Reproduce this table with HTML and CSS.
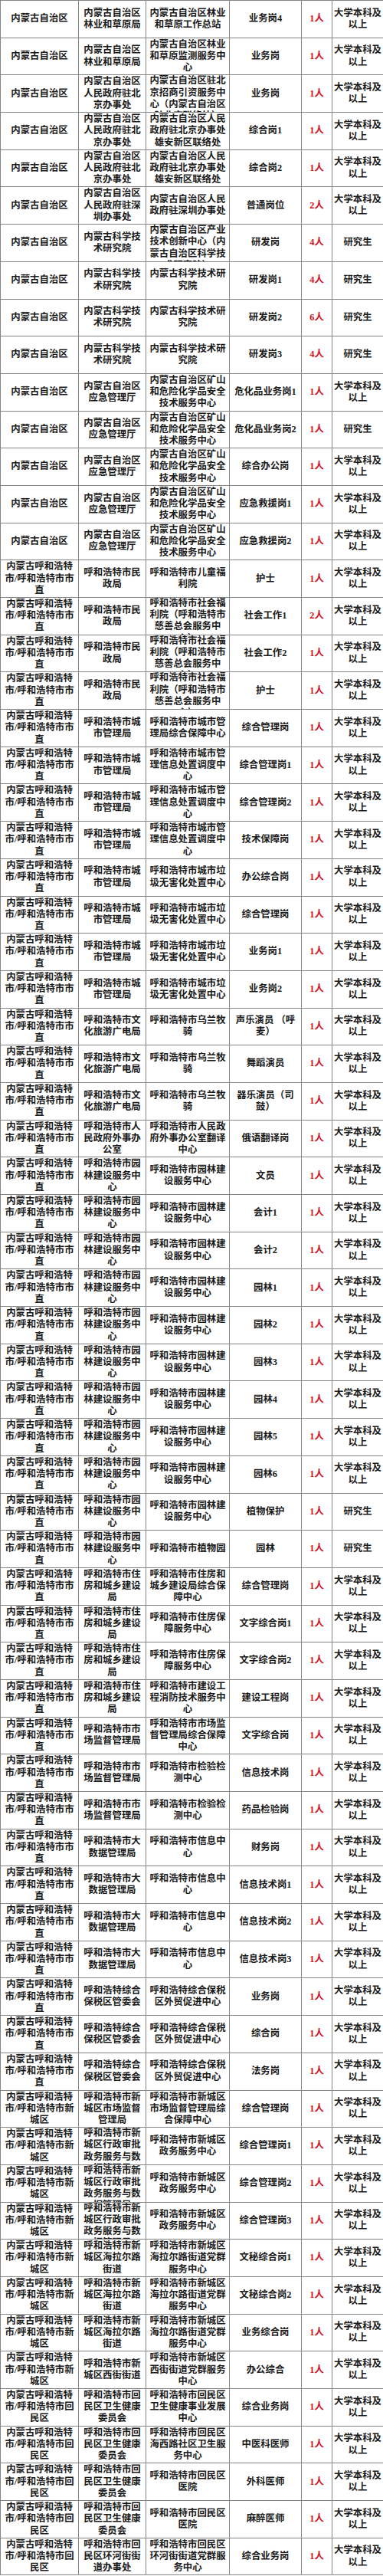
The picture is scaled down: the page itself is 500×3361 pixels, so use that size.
FILE: index.html
```html
<!DOCTYPE html>
<html lang="zh-CN">
<head>
<meta charset="utf-8">
<title>岗位表</title>
<link rel="stylesheet" href="styles.css">
</head>
<body>
<table class="jobs">
<colgroup><col class="w1"><col class="w2"><col class="w3"><col class="w4"><col class="w5"><col class="w6"></colgroup>
<tbody>
<tr><td><div class="cell">内蒙古自治区</div></td><td><div class="cell">内蒙古自治区林业和草原局</div></td><td><div class="cell">内蒙古自治区林业和草原工作总站</div></td><td><div class="cell">业务岗4</div></td><td><div class="cell">1人</div></td><td><div class="cell">大学本科及以上</div></td></tr>
<tr><td><div class="cell">内蒙古自治区</div></td><td><div class="cell">内蒙古自治区林业和草原局</div></td><td><div class="cell">内蒙古自治区林业和草原监测服务中心</div></td><td><div class="cell">业务岗</div></td><td><div class="cell">1人</div></td><td><div class="cell">大学本科及以上</div></td></tr>
<tr><td><div class="cell">内蒙古自治区</div></td><td><div class="cell">内蒙古自治区人民政府驻北京办事处</div></td><td><div class="cell">内蒙古自治区驻北京招商引资服务中心（内蒙古自治区驻北京联络处）</div></td><td><div class="cell">业务岗</div></td><td><div class="cell">1人</div></td><td><div class="cell">大学本科及以上</div></td></tr>
<tr><td><div class="cell">内蒙古自治区</div></td><td><div class="cell">内蒙古自治区人民政府驻北京办事处</div></td><td><div class="cell">内蒙古自治区人民政府驻北京办事处雄安新区联络处</div></td><td><div class="cell">综合岗1</div></td><td><div class="cell">1人</div></td><td><div class="cell">大学本科及以上</div></td></tr>
<tr><td><div class="cell">内蒙古自治区</div></td><td><div class="cell">内蒙古自治区人民政府驻北京办事处</div></td><td><div class="cell">内蒙古自治区人民政府驻北京办事处雄安新区联络处</div></td><td><div class="cell">综合岗2</div></td><td><div class="cell">1人</div></td><td><div class="cell">大学本科及以上</div></td></tr>
<tr><td><div class="cell">内蒙古自治区</div></td><td><div class="cell">内蒙古自治区人民政府驻深圳办事处</div></td><td><div class="cell">内蒙古自治区人民政府驻深圳办事处</div></td><td><div class="cell">普通岗位</div></td><td><div class="cell">2人</div></td><td><div class="cell">大学本科及以上</div></td></tr>
<tr><td><div class="cell">内蒙古自治区</div></td><td><div class="cell">内蒙古科学技术研究院</div></td><td><div class="cell">内蒙古自治区产业技术创新中心（内蒙古自治区科学技术研究院）</div></td><td><div class="cell">研发岗</div></td><td><div class="cell">4人</div></td><td><div class="cell">研究生</div></td></tr>
<tr><td><div class="cell">内蒙古自治区</div></td><td><div class="cell">内蒙古科学技术研究院</div></td><td><div class="cell">内蒙古科学技术研究院</div></td><td><div class="cell">研发岗1</div></td><td><div class="cell">4人</div></td><td><div class="cell">研究生</div></td></tr>
<tr><td><div class="cell">内蒙古自治区</div></td><td><div class="cell">内蒙古科学技术研究院</div></td><td><div class="cell">内蒙古科学技术研究院</div></td><td><div class="cell">研发岗2</div></td><td><div class="cell">6人</div></td><td><div class="cell">研究生</div></td></tr>
<tr><td><div class="cell">内蒙古自治区</div></td><td><div class="cell">内蒙古科学技术研究院</div></td><td><div class="cell">内蒙古科学技术研究院</div></td><td><div class="cell">研发岗3</div></td><td><div class="cell">4人</div></td><td><div class="cell">研究生</div></td></tr>
<tr><td><div class="cell">内蒙古自治区</div></td><td><div class="cell">内蒙古自治区应急管理厅</div></td><td><div class="cell">内蒙古自治区矿山和危险化学品安全技术服务中心</div></td><td><div class="cell">危化品业务岗1</div></td><td><div class="cell">1人</div></td><td><div class="cell">大学本科及以上</div></td></tr>
<tr><td><div class="cell">内蒙古自治区</div></td><td><div class="cell">内蒙古自治区应急管理厅</div></td><td><div class="cell">内蒙古自治区矿山和危险化学品安全技术服务中心</div></td><td><div class="cell">危化品业务岗2</div></td><td><div class="cell">1人</div></td><td><div class="cell">研究生</div></td></tr>
<tr><td><div class="cell">内蒙古自治区</div></td><td><div class="cell">内蒙古自治区应急管理厅</div></td><td><div class="cell">内蒙古自治区矿山和危险化学品安全技术服务中心</div></td><td><div class="cell">综合办公岗</div></td><td><div class="cell">1人</div></td><td><div class="cell">大学本科及以上</div></td></tr>
<tr><td><div class="cell">内蒙古自治区</div></td><td><div class="cell">内蒙古自治区应急管理厅</div></td><td><div class="cell">内蒙古自治区矿山和危险化学品安全技术服务中心</div></td><td><div class="cell">应急救援岗1</div></td><td><div class="cell">1人</div></td><td><div class="cell">大学本科及以上</div></td></tr>
<tr><td><div class="cell">内蒙古自治区</div></td><td><div class="cell">内蒙古自治区应急管理厅</div></td><td><div class="cell">内蒙古自治区矿山和危险化学品安全技术服务中心</div></td><td><div class="cell">应急救援岗2</div></td><td><div class="cell">1人</div></td><td><div class="cell">大学本科及以上</div></td></tr>
<tr><td><div class="cell">内蒙古呼和浩特市/呼和浩特市市直</div></td><td><div class="cell">呼和浩特市民政局</div></td><td><div class="cell">呼和浩特市儿童福利院</div></td><td><div class="cell">护士</div></td><td><div class="cell">1人</div></td><td><div class="cell">大学本科及以上</div></td></tr>
<tr><td><div class="cell">内蒙古呼和浩特市/呼和浩特市市直</div></td><td><div class="cell">呼和浩特市民政局</div></td><td><div class="cell">呼和浩特市社会福利院（呼和浩特市慈善总会服务中心）</div></td><td><div class="cell">社会工作1</div></td><td><div class="cell">2人</div></td><td><div class="cell">大学本科及以上</div></td></tr>
<tr><td><div class="cell">内蒙古呼和浩特市/呼和浩特市市直</div></td><td><div class="cell">呼和浩特市民政局</div></td><td><div class="cell">呼和浩特市社会福利院（呼和浩特市慈善总会服务中心）</div></td><td><div class="cell">社会工作2</div></td><td><div class="cell">1人</div></td><td><div class="cell">大学本科及以上</div></td></tr>
<tr><td><div class="cell">内蒙古呼和浩特市/呼和浩特市市直</div></td><td><div class="cell">呼和浩特市民政局</div></td><td><div class="cell">呼和浩特市社会福利院（呼和浩特市慈善总会服务中心）</div></td><td><div class="cell">护士</div></td><td><div class="cell">1人</div></td><td><div class="cell">大学本科及以上</div></td></tr>
<tr><td><div class="cell">内蒙古呼和浩特市/呼和浩特市市直</div></td><td><div class="cell">呼和浩特市城市管理局</div></td><td><div class="cell">呼和浩特市城市管理局综合保障中心</div></td><td><div class="cell">综合管理岗</div></td><td><div class="cell">1人</div></td><td><div class="cell">大学本科及以上</div></td></tr>
<tr><td><div class="cell">内蒙古呼和浩特市/呼和浩特市市直</div></td><td><div class="cell">呼和浩特市城市管理局</div></td><td><div class="cell">呼和浩特市城市管理信息处置调度中心</div></td><td><div class="cell">综合管理岗1</div></td><td><div class="cell">1人</div></td><td><div class="cell">大学本科及以上</div></td></tr>
<tr><td><div class="cell">内蒙古呼和浩特市/呼和浩特市市直</div></td><td><div class="cell">呼和浩特市城市管理局</div></td><td><div class="cell">呼和浩特市城市管理信息处置调度中心</div></td><td><div class="cell">综合管理岗2</div></td><td><div class="cell">1人</div></td><td><div class="cell">大学本科及以上</div></td></tr>
<tr><td><div class="cell">内蒙古呼和浩特市/呼和浩特市市直</div></td><td><div class="cell">呼和浩特市城市管理局</div></td><td><div class="cell">呼和浩特市城市管理信息处置调度中心</div></td><td><div class="cell">技术保障岗</div></td><td><div class="cell">1人</div></td><td><div class="cell">大学本科及以上</div></td></tr>
<tr><td><div class="cell">内蒙古呼和浩特市/呼和浩特市市直</div></td><td><div class="cell">呼和浩特市城市管理局</div></td><td><div class="cell">呼和浩特市城市垃圾无害化处置中心</div></td><td><div class="cell">办公综合岗</div></td><td><div class="cell">1人</div></td><td><div class="cell">大学本科及以上</div></td></tr>
<tr><td><div class="cell">内蒙古呼和浩特市/呼和浩特市市直</div></td><td><div class="cell">呼和浩特市城市管理局</div></td><td><div class="cell">呼和浩特市城市垃圾无害化处置中心</div></td><td><div class="cell">综合管理岗</div></td><td><div class="cell">1人</div></td><td><div class="cell">大学本科及以上</div></td></tr>
<tr><td><div class="cell">内蒙古呼和浩特市/呼和浩特市市直</div></td><td><div class="cell">呼和浩特市城市管理局</div></td><td><div class="cell">呼和浩特市城市垃圾无害化处置中心</div></td><td><div class="cell">业务岗1</div></td><td><div class="cell">1人</div></td><td><div class="cell">大学本科及以上</div></td></tr>
<tr><td><div class="cell">内蒙古呼和浩特市/呼和浩特市市直</div></td><td><div class="cell">呼和浩特市城市管理局</div></td><td><div class="cell">呼和浩特市城市垃圾无害化处置中心</div></td><td><div class="cell">业务岗2</div></td><td><div class="cell">1人</div></td><td><div class="cell">大学本科及以上</div></td></tr>
<tr><td><div class="cell">内蒙古呼和浩特市/呼和浩特市市直</div></td><td><div class="cell">呼和浩特市文化旅游广电局</div></td><td><div class="cell">呼和浩特市乌兰牧骑</div></td><td><div class="cell">声乐演员 （呼麦）</div></td><td><div class="cell">1人</div></td><td><div class="cell">大学本科及以上</div></td></tr>
<tr><td><div class="cell">内蒙古呼和浩特市/呼和浩特市市直</div></td><td><div class="cell">呼和浩特市文化旅游广电局</div></td><td><div class="cell">呼和浩特市乌兰牧骑</div></td><td><div class="cell">舞蹈演员</div></td><td><div class="cell">1人</div></td><td><div class="cell">大学本科及以上</div></td></tr>
<tr><td><div class="cell">内蒙古呼和浩特市/呼和浩特市市直</div></td><td><div class="cell">呼和浩特市文化旅游广电局</div></td><td><div class="cell">呼和浩特市乌兰牧骑</div></td><td><div class="cell">器乐演员（司鼓）</div></td><td><div class="cell">1人</div></td><td><div class="cell">大学本科及以上</div></td></tr>
<tr><td><div class="cell">内蒙古呼和浩特市/呼和浩特市市直</div></td><td><div class="cell">呼和浩特市人民政府外事办公室</div></td><td><div class="cell">呼和浩特市人民政府外事办公室翻译中心</div></td><td><div class="cell">俄语翻译岗</div></td><td><div class="cell">1人</div></td><td><div class="cell">大学本科及以上</div></td></tr>
<tr><td><div class="cell">内蒙古呼和浩特市/呼和浩特市市直</div></td><td><div class="cell">呼和浩特市园林建设服务中心</div></td><td><div class="cell">呼和浩特市园林建设服务中心</div></td><td><div class="cell">文员</div></td><td><div class="cell">1人</div></td><td><div class="cell">大学本科及以上</div></td></tr>
<tr><td><div class="cell">内蒙古呼和浩特市/呼和浩特市市直</div></td><td><div class="cell">呼和浩特市园林建设服务中心</div></td><td><div class="cell">呼和浩特市园林建设服务中心</div></td><td><div class="cell">会计1</div></td><td><div class="cell">1人</div></td><td><div class="cell">大学本科及以上</div></td></tr>
<tr><td><div class="cell">内蒙古呼和浩特市/呼和浩特市市直</div></td><td><div class="cell">呼和浩特市园林建设服务中心</div></td><td><div class="cell">呼和浩特市园林建设服务中心</div></td><td><div class="cell">会计2</div></td><td><div class="cell">1人</div></td><td><div class="cell">大学本科及以上</div></td></tr>
<tr><td><div class="cell">内蒙古呼和浩特市/呼和浩特市市直</div></td><td><div class="cell">呼和浩特市园林建设服务中心</div></td><td><div class="cell">呼和浩特市园林建设服务中心</div></td><td><div class="cell">园林1</div></td><td><div class="cell">1人</div></td><td><div class="cell">大学本科及以上</div></td></tr>
<tr><td><div class="cell">内蒙古呼和浩特市/呼和浩特市市直</div></td><td><div class="cell">呼和浩特市园林建设服务中心</div></td><td><div class="cell">呼和浩特市园林建设服务中心</div></td><td><div class="cell">园林2</div></td><td><div class="cell">1人</div></td><td><div class="cell">大学本科及以上</div></td></tr>
<tr><td><div class="cell">内蒙古呼和浩特市/呼和浩特市市直</div></td><td><div class="cell">呼和浩特市园林建设服务中心</div></td><td><div class="cell">呼和浩特市园林建设服务中心</div></td><td><div class="cell">园林3</div></td><td><div class="cell">1人</div></td><td><div class="cell">大学本科及以上</div></td></tr>
<tr><td><div class="cell">内蒙古呼和浩特市/呼和浩特市市直</div></td><td><div class="cell">呼和浩特市园林建设服务中心</div></td><td><div class="cell">呼和浩特市园林建设服务中心</div></td><td><div class="cell">园林4</div></td><td><div class="cell">1人</div></td><td><div class="cell">大学本科及以上</div></td></tr>
<tr><td><div class="cell">内蒙古呼和浩特市/呼和浩特市市直</div></td><td><div class="cell">呼和浩特市园林建设服务中心</div></td><td><div class="cell">呼和浩特市园林建设服务中心</div></td><td><div class="cell">园林5</div></td><td><div class="cell">1人</div></td><td><div class="cell">大学本科及以上</div></td></tr>
<tr><td><div class="cell">内蒙古呼和浩特市/呼和浩特市市直</div></td><td><div class="cell">呼和浩特市园林建设服务中心</div></td><td><div class="cell">呼和浩特市园林建设服务中心</div></td><td><div class="cell">园林6</div></td><td><div class="cell">1人</div></td><td><div class="cell">大学本科及以上</div></td></tr>
<tr><td><div class="cell">内蒙古呼和浩特市/呼和浩特市市直</div></td><td><div class="cell">呼和浩特市园林建设服务中心</div></td><td><div class="cell">呼和浩特市园林建设服务中心</div></td><td><div class="cell">植物保护</div></td><td><div class="cell">1人</div></td><td><div class="cell">研究生</div></td></tr>
<tr><td><div class="cell">内蒙古呼和浩特市/呼和浩特市市直</div></td><td><div class="cell">呼和浩特市园林建设服务中心</div></td><td><div class="cell">呼和浩特市植物园</div></td><td><div class="cell">园林</div></td><td><div class="cell">1人</div></td><td><div class="cell">研究生</div></td></tr>
<tr><td><div class="cell">内蒙古呼和浩特市/呼和浩特市市直</div></td><td><div class="cell">呼和浩特市住房和城乡建设局</div></td><td><div class="cell">呼和浩特市住房和城乡建设局综合保障中心</div></td><td><div class="cell">综合管理岗</div></td><td><div class="cell">1人</div></td><td><div class="cell">大学本科及以上</div></td></tr>
<tr><td><div class="cell">内蒙古呼和浩特市/呼和浩特市市直</div></td><td><div class="cell">呼和浩特市住房和城乡建设局</div></td><td><div class="cell">呼和浩特市住房保障服务中心</div></td><td><div class="cell">文字综合岗1</div></td><td><div class="cell">1人</div></td><td><div class="cell">大学本科及以上</div></td></tr>
<tr><td><div class="cell">内蒙古呼和浩特市/呼和浩特市市直</div></td><td><div class="cell">呼和浩特市住房和城乡建设局</div></td><td><div class="cell">呼和浩特市住房保障服务中心</div></td><td><div class="cell">文字综合岗2</div></td><td><div class="cell">1人</div></td><td><div class="cell">大学本科及以上</div></td></tr>
<tr><td><div class="cell">内蒙古呼和浩特市/呼和浩特市市直</div></td><td><div class="cell">呼和浩特市住房和城乡建设局</div></td><td><div class="cell">呼和浩特市建设工程消防技术服务中心</div></td><td><div class="cell">建设工程岗</div></td><td><div class="cell">1人</div></td><td><div class="cell">大学本科及以上</div></td></tr>
<tr><td><div class="cell">内蒙古呼和浩特市/呼和浩特市市直</div></td><td><div class="cell">呼和浩特市市场监督管理局</div></td><td><div class="cell">呼和浩特市市场监督管理局综合保障中心</div></td><td><div class="cell">文字综合岗</div></td><td><div class="cell">1人</div></td><td><div class="cell">大学本科及以上</div></td></tr>
<tr><td><div class="cell">内蒙古呼和浩特市/呼和浩特市市直</div></td><td><div class="cell">呼和浩特市市场监督管理局</div></td><td><div class="cell">呼和浩特市检验检测中心</div></td><td><div class="cell">信息技术岗</div></td><td><div class="cell">1人</div></td><td><div class="cell">大学本科及以上</div></td></tr>
<tr><td><div class="cell">内蒙古呼和浩特市/呼和浩特市市直</div></td><td><div class="cell">呼和浩特市市场监督管理局</div></td><td><div class="cell">呼和浩特市检验检测中心</div></td><td><div class="cell">药品检验岗</div></td><td><div class="cell">1人</div></td><td><div class="cell">大学本科及以上</div></td></tr>
<tr><td><div class="cell">内蒙古呼和浩特市/呼和浩特市市直</div></td><td><div class="cell">呼和浩特市大数据管理局</div></td><td><div class="cell">呼和浩特市信息中心</div></td><td><div class="cell">财务岗</div></td><td><div class="cell">1人</div></td><td><div class="cell">大学本科及以上</div></td></tr>
<tr><td><div class="cell">内蒙古呼和浩特市/呼和浩特市市直</div></td><td><div class="cell">呼和浩特市大数据管理局</div></td><td><div class="cell">呼和浩特市信息中心</div></td><td><div class="cell">信息技术岗1</div></td><td><div class="cell">1人</div></td><td><div class="cell">大学本科及以上</div></td></tr>
<tr><td><div class="cell">内蒙古呼和浩特市/呼和浩特市市直</div></td><td><div class="cell">呼和浩特市大数据管理局</div></td><td><div class="cell">呼和浩特市信息中心</div></td><td><div class="cell">信息技术岗2</div></td><td><div class="cell">1人</div></td><td><div class="cell">大学本科及以上</div></td></tr>
<tr><td><div class="cell">内蒙古呼和浩特市/呼和浩特市市直</div></td><td><div class="cell">呼和浩特市大数据管理局</div></td><td><div class="cell">呼和浩特市信息中心</div></td><td><div class="cell">信息技术岗3</div></td><td><div class="cell">1人</div></td><td><div class="cell">大学本科及以上</div></td></tr>
<tr><td><div class="cell">内蒙古呼和浩特市/呼和浩特市市直</div></td><td><div class="cell">呼和浩特综合保税区管委会</div></td><td><div class="cell">呼和浩特综合保税区外贸促进中心</div></td><td><div class="cell">业务岗</div></td><td><div class="cell">1人</div></td><td><div class="cell">大学本科及以上</div></td></tr>
<tr><td><div class="cell">内蒙古呼和浩特市/呼和浩特市市直</div></td><td><div class="cell">呼和浩特综合保税区管委会</div></td><td><div class="cell">呼和浩特综合保税区外贸促进中心</div></td><td><div class="cell">综合岗</div></td><td><div class="cell">1人</div></td><td><div class="cell">大学本科及以上</div></td></tr>
<tr><td><div class="cell">内蒙古呼和浩特市/呼和浩特市市直</div></td><td><div class="cell">呼和浩特综合保税区管委会</div></td><td><div class="cell">呼和浩特综合保税区外贸促进中心</div></td><td><div class="cell">法务岗</div></td><td><div class="cell">1人</div></td><td><div class="cell">大学本科及以上</div></td></tr>
<tr><td><div class="cell">内蒙古呼和浩特市/呼和浩特市新城区</div></td><td><div class="cell">呼和浩特市新城区市场监督管理局</div></td><td><div class="cell">呼和浩特市新城区市场监督管理局综合保障中心</div></td><td><div class="cell">综合管理岗</div></td><td><div class="cell">1人</div></td><td><div class="cell">大学本科及以上</div></td></tr>
<tr><td><div class="cell">内蒙古呼和浩特市/呼和浩特市新城区</div></td><td><div class="cell">呼和浩特市新城区行政审批政务服务与数据管理局</div></td><td><div class="cell">呼和浩特市新城区政务服务中心</div></td><td><div class="cell">综合管理岗1</div></td><td><div class="cell">1人</div></td><td><div class="cell">大学本科及以上</div></td></tr>
<tr><td><div class="cell">内蒙古呼和浩特市/呼和浩特市新城区</div></td><td><div class="cell">呼和浩特市新城区行政审批政务服务与数据管理局</div></td><td><div class="cell">呼和浩特市新城区政务服务中心</div></td><td><div class="cell">综合管理岗2</div></td><td><div class="cell">1人</div></td><td><div class="cell">大学本科及以上</div></td></tr>
<tr><td><div class="cell">内蒙古呼和浩特市/呼和浩特市新城区</div></td><td><div class="cell">呼和浩特市新城区行政审批政务服务与数据管理局</div></td><td><div class="cell">呼和浩特市新城区政务服务中心</div></td><td><div class="cell">综合管理岗3</div></td><td><div class="cell">1人</div></td><td><div class="cell">大学本科及以上</div></td></tr>
<tr><td><div class="cell">内蒙古呼和浩特市/呼和浩特市新城区</div></td><td><div class="cell">呼和浩特市新城区海拉尔路街道</div></td><td><div class="cell">呼和浩特市新城区海拉尔路街道党群服务中心</div></td><td><div class="cell">文秘综合岗1</div></td><td><div class="cell">1人</div></td><td><div class="cell">大学本科及以上</div></td></tr>
<tr><td><div class="cell">内蒙古呼和浩特市/呼和浩特市新城区</div></td><td><div class="cell">呼和浩特市新城区海拉尔路街道</div></td><td><div class="cell">呼和浩特市新城区海拉尔路街道党群服务中心</div></td><td><div class="cell">文秘综合岗2</div></td><td><div class="cell">1人</div></td><td><div class="cell">大学本科及以上</div></td></tr>
<tr><td><div class="cell">内蒙古呼和浩特市/呼和浩特市新城区</div></td><td><div class="cell">呼和浩特市新城区海拉尔路街道</div></td><td><div class="cell">呼和浩特市新城区海拉尔路街道党群服务中心</div></td><td><div class="cell">业务综合岗</div></td><td><div class="cell">1人</div></td><td><div class="cell">大学本科及以上</div></td></tr>
<tr><td><div class="cell">内蒙古呼和浩特市/呼和浩特市新城区</div></td><td><div class="cell">呼和浩特市新城区西街街道</div></td><td><div class="cell">呼和浩特市新城区西街街道党群服务中心</div></td><td><div class="cell">办公综合</div></td><td><div class="cell">1人</div></td><td><div class="cell">大学本科及以上</div></td></tr>
<tr><td><div class="cell">内蒙古呼和浩特市/呼和浩特市回民区</div></td><td><div class="cell">呼和浩特市回民区卫生健康委员会</div></td><td><div class="cell">呼和浩特市回民区卫生健康事业发展中心</div></td><td><div class="cell">综合业务岗</div></td><td><div class="cell">1人</div></td><td><div class="cell">大学本科及以上</div></td></tr>
<tr><td><div class="cell">内蒙古呼和浩特市/呼和浩特市回民区</div></td><td><div class="cell">呼和浩特市回民区卫生健康委员会</div></td><td><div class="cell">呼和浩特市回民区海西路社区卫生服务中心</div></td><td><div class="cell">中医科医师</div></td><td><div class="cell">1人</div></td><td><div class="cell">大学本科及以上</div></td></tr>
<tr><td><div class="cell">内蒙古呼和浩特市/呼和浩特市回民区</div></td><td><div class="cell">呼和浩特市回民区卫生健康委员会</div></td><td><div class="cell">呼和浩特市回民区医院</div></td><td><div class="cell">外科医师</div></td><td><div class="cell">1人</div></td><td><div class="cell">大学本科及以上</div></td></tr>
<tr><td><div class="cell">内蒙古呼和浩特市/呼和浩特市回民区</div></td><td><div class="cell">呼和浩特市回民区卫生健康委员会</div></td><td><div class="cell">呼和浩特市回民区医院</div></td><td><div class="cell">麻醉医师</div></td><td><div class="cell">1人</div></td><td><div class="cell">大学本科及以上</div></td></tr>
<tr><td><div class="cell">内蒙古呼和浩特市/呼和浩特市回民区</div></td><td><div class="cell">呼和浩特市回民区环河街街道办事处</div></td><td><div class="cell">呼和浩特市回民区环河街街道党群服务中心</div></td><td><div class="cell">综合业务岗</div></td><td><div class="cell">1人</div></td><td><div class="cell">大学本科及以上</div></td></tr>
</tbody>
</table>
</body>
</html>
```

FILE: styles.css
```css
html, body {
  margin: 0;
  padding: 0;
  background: #ffffff;
}

body {
  font-family: "Liberation Serif", "Noto Sans CJK SC", serif;
  color: #1a1a1a;
}

.jobs {
  width: 500px;
  table-layout: fixed;
  border-collapse: collapse;
}

.w1 { width: 102px; }
.w2 { width: 88px; }
.w3 { width: 109px; }
.w4 { width: 94px; }
.w5 { width: 40px; }
.w6 { width: 67px; }

.jobs td {
  border: 1px solid #858585;
  padding: 0;
}

.cell {
  height: 47.7px;
  overflow: hidden;
  display: flex;
  justify-content: center;
  align-items: center;
  align-items: safe center;
  text-align: center;
  padding: 0 3px;
  font-size: 12.4px;
  line-height: 15.2px;
  font-weight: 700;
}

.jobs td:nth-child(4) .cell {
  padding: 0 4px;
}

.jobs td:nth-child(5) .cell {
  color: #d0121f;
  padding: 0;
}

.jobs td:nth-child(6) .cell {
  padding: 0 1px;
}
```
